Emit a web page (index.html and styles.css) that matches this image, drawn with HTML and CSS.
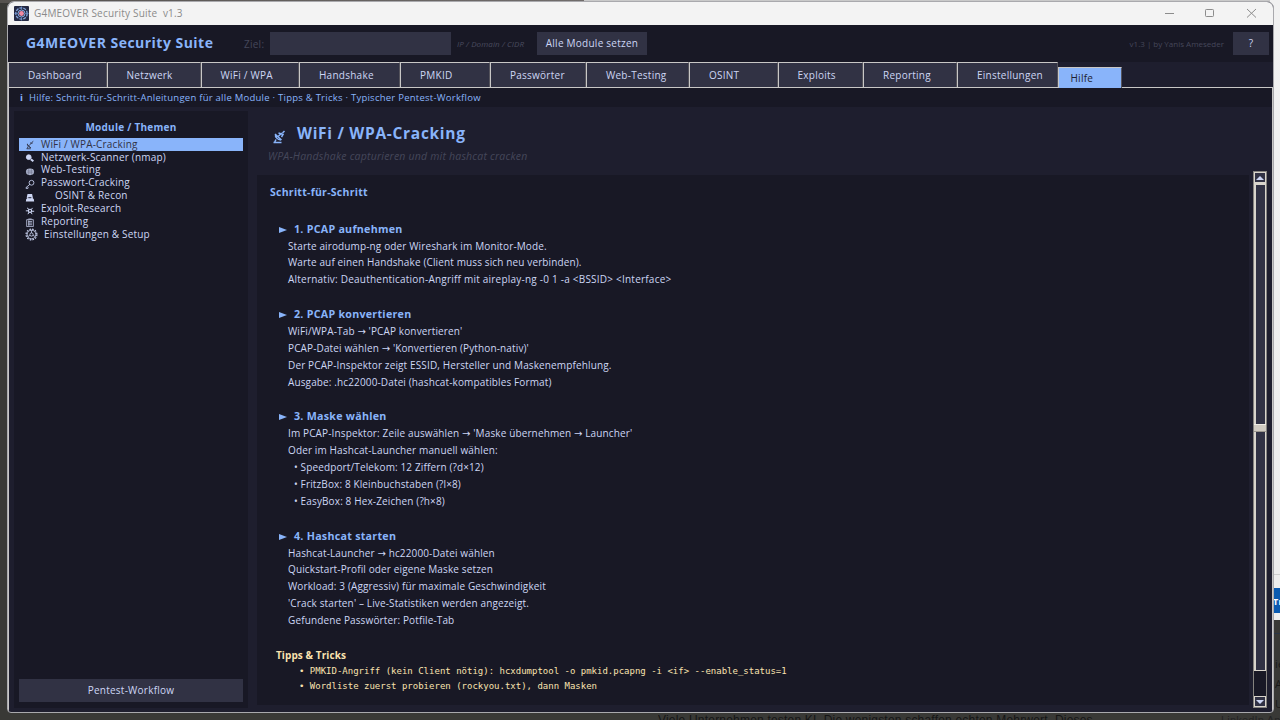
FILE: index.html
```
<!DOCTYPE html>
<html lang="de">
	<head>
		<meta charset="utf-8">
		<title>G4MEOVER Security Suite v1.3</title>
		<link rel="stylesheet" href="styles.css">
	</head>
	<body>
		<!-- Desktop hinter dem Fenster -->
		<div class="desktop">
			<div class="top-strip"></div>
			<div class="page-behind"><span class="badge">Tr</span></div>
			<div class="behind-side">ie<br>A<br>U</div>
			<div class="behind-text">Viele Unternehmen testen KI. Die wenigsten schaffen echten Mehrwert. Dieses</div>
			<div class="behind-link">LinkedIn Ap</div>
		</div>

		<div class="window">
			<div class="titlebar">
				<svg class="logo" width="15" height="15" viewBox="0 0 15 15">
					<rect width="15" height="15" rx="1" fill="#252a44"/>
					<circle cx="7.5" cy="7.5" r="5.700" fill="none" stroke="#7f9fd6" stroke-width="1.300" stroke-dasharray="3 1"/>
					<circle cx="7.5" cy="7.5" r="3.500" fill="none" stroke="#86a9e2" stroke-width="1"/>
					<path d="M7.500 0.500v3M7.500 11.500v3M0.500 7.500h3M11.500 7.500h3" stroke="#6d8fc9" stroke-width="0.800"/>
					<circle cx="7.500" cy="7.500" r="2.400" fill="#f08aa4"/>
				</svg>
				<span class="title">G4MEOVER Security Suite&nbsp; v1.3</span>
				<svg class="controls" width="96" height="12" viewBox="0 0 96 12" fill="none" stroke="#8c8c8c">
					<path d="M2 6.500h9"/>
					<rect x="42.500" y="2.500" width="8" height="7" rx="0.800"/>
					<path d="M84 2l9 8.500M93 2l-9 8.500"/>
				</svg>
			</div>

			<div class="header">
				<h1>G4MEOVER Security Suite</h1>
				<label class="ziel">Ziel:</label>
				<div class="input"></div>
				<span class="hint">IP / Domain / CIDR</span>
				<div class="btn set-all">Alle Module setzen</div>
				<span class="author">v1.3 | by Yanis Ameseder</span>
				<div class="btn help">?</div>
			</div>

			<div class="tabs">
				<div class="tab">Dashboard</div>
				<div class="tab">Netzwerk</div>
				<div class="tab">WiFi / WPA</div>
				<div class="tab">Handshake</div>
				<div class="tab">PMKID</div>
				<div class="tab">Passwörter</div>
				<div class="tab">Web-Testing</div>
				<div class="tab">OSINT</div>
				<div class="tab">Exploits</div>
				<div class="tab">Reporting</div>
				<div class="tab">Einstellungen</div>
				<div class="tab active">Hilfe</div>
			</div>

			<div class="pane">
				<div class="info"><b>i</b><span>Hilfe: Schritt-für-Schritt-Anleitungen für alle Module · Tipps &amp; Tricks · Typischer Pentest-Workflow</span></div>
				<div class="main">
					<div class="sidebar">
						<h2>Module / Themen</h2>
						<ul class="topics">
							<li class="selected">
								<svg viewBox="0 0 12 12" fill="none" stroke="currentColor"><path d="M2.500 5l4.500 4.500M3 4.500c-.5 2.500 1.500 5 4 4.500M4.500 7l4-4M6 3.500l3 .5M8 3l2-1.500M2 10.500h5M3.500 8l-1 2.500"/></svg>
								<span>WiFi / WPA-Cracking</span>
							</li>
							<li>
								<svg viewBox="0 0 12 12" fill="currentColor" stroke="currentColor"><circle cx="4.500" cy="5" r="2.900"/><path d="M7 7.500l3 2.500" stroke-width="2.400"/></svg>
								<span>Netzwerk-Scanner (nmap)</span>
							</li>
							<li>
								<svg viewBox="0 0 12 12"><ellipse cx="6" cy="7" rx="4.900" ry="4" fill="#b4bcd6"/><path d="M1.500 6h9M1.500 8.200h9M4.500 3.500v7M7.500 3.500v7" stroke="#5a5d75" stroke-width=".6"/></svg>
								<span>Web-Testing</span>
							</li>
							<li>
								<svg viewBox="0 0 12 12" fill="none" stroke="currentColor"><circle cx="7.800" cy="4.500" r="2.900"/><path d="M6 6.300L1 10.500M1.500 10v1.500h1.800l.5-2"/></svg>
								<span>Passwort-Cracking</span>
							</li>
							<li class="indent">
								<svg viewBox="0 0 12 12" fill="currentColor"><path d="M3 2.500h5.500l1 4.500h-7.500zM1.500 8h9l.5 3.500H1z"/><path d="M2.500 6.500h7v3H2.500z"/><path d="M4 6h3.500v1.500H4z" fill="#45475a"/></svg>
								<span>OSINT &amp; Recon</span>
							</li>
							<li>
								<svg viewBox="0 0 12 12" fill="none" stroke="currentColor" stroke-width="1.200"><circle cx="6" cy="7" r="1.900" stroke-width="1.400"/><path d="M2.500 3.500l2.500 2M9 3.500L7.500 5.500M1 7H4M8 7.500h3M3.500 11L5 8.500M8.500 11L7 8.500"/></svg>
								<span>Exploit-Research</span>
							</li>
							<li>
								<svg viewBox="0 0 12 12" fill="none" stroke="currentColor" stroke-width=".9"><path d="M2 3.200h8v8.300h-8zM4 2.400h4M4 5.500h4.500M4 7.300h4.500M4 9.300h4.500M4.500 4v6.500"/></svg>
								<span>Reporting</span>
							</li>
							<li class="gear">
								<svg viewBox="0 0 12 12" fill="none" stroke="currentColor"><circle cx="6" cy="6" r="5" stroke-width="1.100" stroke-dasharray="1.500 1.118"/><circle cx="6" cy="6" r="4" stroke-width=".8"/><circle cx="6" cy="6" r="1.500" stroke-width=".8"/><path d="M6 2v2.500M2.800 7.800l1.800-1M9.200 7.800l-1.800-1" stroke-width=".7"/></svg>
								<span>Einstellungen &amp; Setup</span>
							</li>
						</ul>
						<div class="btn workflow">Pentest-Workflow</div>
					</div>

					<div class="content">
						<div class="content-head">
							<h2>
								<svg width="15" height="15" viewBox="0 0 15 15" fill="none" stroke="currentColor" stroke-width="1.500"><path d="M3 5l6.500 6M3.500 5c-.5 3 2 6 5.500 6M5.500 8l4.500-4M6.500 4l4.500 1.500L9.500 8M10.500 4l2-2M1.500 13.500h8M4 10.500l-1.500 3"/></svg>
								<span>WiFi / WPA-Cracking</span>
							</h2>
							<p>WPA-Handshake capturieren und mit hashcat cracken</p>
						</div>
						<div class="text-area">
							<div class="text">
								<h3>Schritt-für-Schritt</h3>
								<div class="step">
									<h4>1. PCAP aufnehmen</h4>
									<p>Starte airodump-ng oder Wireshark im Monitor-Mode.</p>
									<p>Warte auf einen Handshake (Client muss sich neu verbinden).</p>
									<p class="wide">Alternativ: Deauthentication-Angriff mit aireplay-ng -0 1 -a &lt;BSSID&gt; &lt;Interface&gt;</p>
								</div>
								<div class="step">
									<h4>2. PCAP konvertieren</h4>
									<p>WiFi/WPA-Tab <i>→</i> 'PCAP konvertieren'</p>
									<p>PCAP-Datei wählen <i>→</i> 'Konvertieren (Python-nativ)'</p>
									<p>Der PCAP-Inspektor zeigt ESSID, Hersteller und Maskenempfehlung.</p>
									<p>Ausgabe: .hc22000-Datei (hashcat-kompatibles Format)</p>
								</div>
								<div class="step">
									<h4>3. Maske wählen</h4>
									<p>Im PCAP-Inspektor: Zeile auswählen <i>→</i> 'Maske übernehmen <i>→</i> Launcher'</p>
									<p>Oder im Hashcat-Launcher manuell wählen:</p>
									<p class="sub">• Speedport/Telekom: 12 Ziffern (?d×12)</p>
									<p class="sub">• FritzBox: 8 Kleinbuchstaben (?l×8)</p>
									<p class="sub">• EasyBox: 8 Hex-Zeichen (?h×8)</p>
								</div>
								<div class="step">
									<h4>4. Hashcat starten</h4>
									<p>Hashcat-Launcher <i>→</i> hc22000-Datei wählen</p>
									<p>Quickstart-Profil oder eigene Maske setzen</p>
									<p>Workload: 3 (Aggressiv) für maximale Geschwindigkeit</p>
									<p>'Crack starten' – Live-Statistiken werden angezeigt.</p>
									<p>Gefundene Passwörter: Potfile-Tab</p>
								</div>
								<div class="tips">
									<h5>Tipps &amp; Tricks</h5>
									<p>• PMKID-Angriff (kein Client nötig): hcxdumptool -o pmkid.pcapng -i &lt;if&gt; --enable_status=1</p>
									<p>• Wordliste zuerst probieren (rockyou.txt), dann Masken</p>
								</div>
							</div>
							<div class="scrollbar">
								<div class="arrow up"></div>
								<div class="thumb"><div class="grip"></div></div>
								<div class="trough"></div>
								<div class="arrow down"></div>
							</div>
						</div>
					</div>
				</div>
			</div>
		</div>
	</body>
</html>
```
FILE: styles.css
```
*{
	padding: 0px;
	margin: 0px;
	box-sizing: border-box;
}
body{
	width: 1280px;
	height: 720px;
	overflow: hidden;
	position: relative;
	background-color: #393936;
	color: #cdd6f4;
	font-family: "Open Sans", "Noto Sans", sans-serif;
	font-size: 10px;
	letter-spacing: 0.25px;
	white-space: nowrap;
}
ul{
	list-style: none;
}

/* Desktop */
.top-strip{
	position: absolute;
	left: 0;
	top: 0;
	width: 1280px;
	height: 3px;
	background: linear-gradient(to right, #55524f 0, #706c6b 584px, #c9c9c9 584px);
}
.page-behind{
	position: absolute;
	left: 1270px;
	top: 0;
	width: 10px;
	height: 620px;
	padding-top: 588px;
	background: linear-gradient(#f1f1f1 0, #ededed 574px, #cfcfcf 574px, #cfcfcf 575px, #ededed 575px);
}
.badge{
	display: block;
	height: 25px;
	padding-left: 3px;
	overflow: hidden;
	background-color: #0a5ab0;
	color: #fff;
	font-size: 9px;
	font-weight: bold;
	line-height: 27px;
}
.behind-side{
	position: absolute;
	left: 1270px;
	top: 633px;
	width: 10px;
	height: 87px;
	padding: 20px 0 0 5px;
	border-top: 1px solid #2b3546;
	overflow: hidden;
	color: #191919;
	font-size: 11px;
	line-height: 20px;
}
.behind-text,
.behind-link{
	position: absolute;
	top: 713px;
	left: 658px;
	height: 7px;
	overflow: hidden;
	color: #151515;
	font-family: "Liberation Sans", sans-serif;
	font-size: 12px;
	letter-spacing: 0.2px;
	line-height: 15px;
}
.behind-link{
	left: 1221px;
	color: #242424;
	font-size: 11px;
}

/* Fenster */
.window{
	position: absolute;
	left: 7px;
	top: 1px;
	width: 1267px;
	height: 712px;
	display: flex;
	flex-direction: column;
	overflow: hidden;
	background-color: #1e1e2e;
	border: 1px solid #a9a9ad;
	border-radius: 7px 7px 4px 4px;
}
.titlebar{
	height: 23px;
	flex: none;
	display: flex;
	align-items: center;
	padding: 0 14px 0 6px;
	background-color: #f3f3f3;
	color: #8a8a8a;
}
.title{
	margin-left: 5px;
	letter-spacing: 0.2px;
	line-height: 14px;
	margin-top: -2px;
}
.controls{
	margin-left: auto;
	margin-top: -1px;
}
.logo{
	margin-top: -1px;
}
.header{
	height: 37px;
	flex: none;
	display: flex;
	align-items: center;
	padding: 0 4px 0 18px;
	background-color: #181825;
}
.header h1{
	width: 218px;
	color: #89b4fa;
	font-size: 14px;
	letter-spacing: 0.480px;
	line-height: 18px;
	margin-top: -1px;
}
.ziel{
	width: 26px;
	color: #45475a;
}
.input{
	width: 181px;
	height: 23px;
	background-color: #313244;
}
.hint{
	width: 86px;
	padding-left: 6px;
	color: #494b5f;
	font-size: 8px;
	font-style: italic;
	letter-spacing: 0.1px;
}
.btn{
	height: 23px;
	background-color: #313244;
	text-align: center;
	line-height: 23px;
}
.set-all{
	width: 110px;
}
.author{
	margin-left: auto;
	color: #45475a;
	font-size: 8px;
	letter-spacing: 0;
}
.help{
	width: 36px;
	margin-left: 9px;
}

/* Tabs */
.tabs{
	height: 25px;
	flex: none;
	display: grid;
	grid-template-columns: 98.500px 94px 98.500px 101px 90px 96px 103px 88.500px 85.500px 94px 100.500px 64px;
	align-items: end;
	position: relative;
	z-index: 1;
}
.tab{
	height: 25px;
	padding-left: 19px;
	background-color: #313244;
	border: 1px solid #c8c7c6;
	border-right-color: #55545c;
	border-bottom: none;
	line-height: 24px;
}
.tab.active{
	height: 21px;
	padding-left: 12px;
	margin-bottom: -1px;
	background-color: #89b4fa;
	color: #1e1e2e;
	line-height: 21px;
}
.pane{
	flex: 1;
	display: flex;
	flex-direction: column;
	border: 1px solid #c8c7c6;
	border-bottom: none;
}
.info{
	height: 19px;
	flex: none;
	display: flex;
	padding-left: 11px;
	background-color: #181825;
	color: #89b4fa;
	font-size: 9.500px;
	line-height: 19px;
}
.info b{
	width: 9px;
}
.main{
	flex: 1;
	display: flex;
	padding: 4px 5px 4px 5px;
}

/* Sidebar */
.sidebar{
	width: 234px;
	display: flex;
	flex-direction: column;
	padding: 9px 5px 6px;
	background-color: #181825;
}
.sidebar h2{
	height: 18px;
	color: #89b4fa;
	font-size: 10px;
	line-height: 15px;
	text-align: center;
}
.topics li{
	height: 12.850px;
	display: flex;
	align-items: center;
	padding-left: 6px;
	letter-spacing: 0.180px;
	line-height: 13.400px;
}
.topics li.selected{
	background-color: #89b4fa;
	color: #313244;
}
.topics svg{
	width: 10px;
	height: 10px;
	margin-top: 2px;
}
.topics span{
	margin-left: 6px;
}
.topics .indent span{
	margin-left: 20px;
}
.topics .gear svg{
	width: 13px;
	height: 13px;
	margin-top: 0;
}
.topics .gear span{
	margin-left: 6px;
}
.workflow{
	margin-top: auto;
}

/* Inhalt */
.content{
	flex: 1;
	display: flex;
	flex-direction: column;
	padding-left: 9px;
}
.content-head{
	height: 64px;
	padding: 9px 0 0 11px;
}
.content-head h2{
	height: 25px;
	display: flex;
	align-items: center;
	padding-left: 4px;
	color: #89b4fa;
	font-size: 15.500px;
	letter-spacing: 0.700px;
	line-height: 24px;
}
.content-head h2 svg{
	margin-top: 7px;
}
.content-head h2 span{
	margin-left: 10px;
}
.content-head p{
	color: #45475a;
	font-style: italic;
	font-size: 10.500px;
	letter-spacing: 0.200px;
	line-height: 22px;
}
.text-area{
	flex: 1;
	display: flex;
	justify-content: space-between;
}
.text{
	width: 992px;
	height: 530px;
	padding: 8px 0 0 13px;
	background-color: #181825;
}
.text h3{
	height: 37.500px;
	color: #89b4fa;
	font-size: 10.500px;
	letter-spacing: 0.260px;
	line-height: 18px;
}
.step{
	margin-bottom: 18px;
	padding-left: 18px;
}
.step h4{
	margin-left: -9px;
	color: #89b4fa;
	font-size: 10.700px;
	letter-spacing: 0.260px;
	line-height: 17px;
}
.step h4::before{
	content: "";
	display: inline-block;
	margin-right: 7px;
	border-left: 8px solid #89b4fa;
	border-top: 3.500px solid transparent;
	border-bottom: 3.500px solid transparent;
}
.step p{
	height: 16.850px;
	letter-spacing: 0.130px;
	line-height: 17.600px;
}
.step p i{
	font-family: "DejaVu Sans", sans-serif;
	font-style: normal;
}
.step .wide{
	letter-spacing: 0.220px;
}
.step .sub{
	padding-left: 6px;
}
.tips{
	padding-left: 6px;
	color: #f9e2af;
}
.tips h5{
	font-size: 10px;
	letter-spacing: 0.080px;
	line-height: 17px;
}
.tips p{
	padding-left: 23px;
	font-family: "DejaVu Sans Mono", monospace;
	font-size: 9px;
	letter-spacing: 0;
	line-height: 15.400px;
}

/* Scrollbar */
.scrollbar{
	width: 14px;
	height: 537px;
	margin-top: -4px;
	display: flex;
	flex-direction: column;
	border: 1px solid #85837f;
	background-color: #181825;
}
.arrow{
	height: 11px;
	flex: none;
	display: flex;
	align-items: center;
	justify-content: center;
	background-color: #313244;
	border: 1px solid #d9d5cc;
}
.arrow::before{
	content: "";
	border-left: 4px solid transparent;
	border-right: 4px solid transparent;
}
.up::before{
	border-bottom: 4px solid #cdd6f4;
}
.down::before{
	border-top: 4px solid #cdd6f4;
}
.thumb{
	height: 488px;
	display: flex;
	align-items: center;
	background-color: #313244;
	border: 1px solid #d9d5cc;
	border-width: 2px 1px 1px 2px;
}
.grip{
	width: 12px;
	height: 8px;
	margin-left: -2px;
	flex: none;
	background-color: #d0cbc2;
	border-top: 1px solid #f0ede6;
	border-bottom: 1px solid #9b978f;
}
.trough{
	flex: 1;
}
```
